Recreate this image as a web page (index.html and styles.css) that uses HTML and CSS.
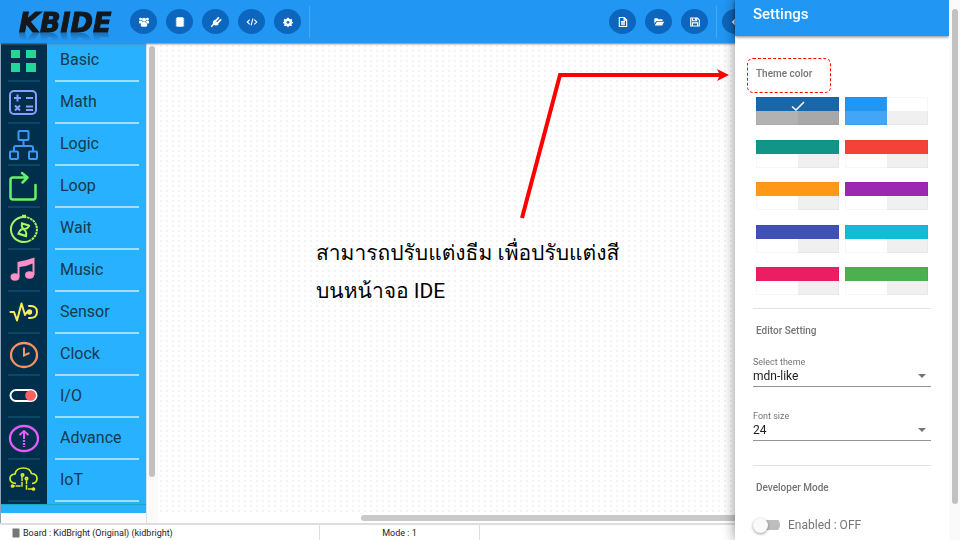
FILE: index.html
```html
<!DOCTYPE html>
<html lang="th">
<head>
<meta charset="utf-8">
<meta name="viewport" content="width=device-width, initial-scale=1">
<title>KBIDE</title>
<link rel="stylesheet" href="styles.css">
</head>
<body>
<div class="app">
  <header class="topbar">
    <h1 class="logo">KBIDE</h1>
    <nav class="tools" aria-label="Board tools">
      <button class="tool" type="button" aria-label="Community"><svg viewBox="0 0 14 14"><circle cx="3" cy="3.6" r="1.7"/><circle cx="11" cy="3.6" r="1.7"/><circle cx="7" cy="4.4" r="2.4"/><path d="M1.4 5.6h3l1 1.6-1.8 1.6H2.2Q1 8.600 1 7.200zM12.600 5.600h-3L8.600 7.200l1.800 1.600h1.400Q13 8.600 13 7.200zM4.400 7h5.200q1.400 1.200 1.200 4.200Q10.700 12.400 9.500 12.400h-5Q3.300 12.400 3.200 11.200 3 8.200 4.400 7z"/></svg></button>
      <button class="tool" type="button" aria-label="Board"><svg viewBox="0 0 14 14"><rect x="3" y="1.500" width="8" height="11" rx="1"/><path d="M2.700 2.500v9.500M11.300 2.500v9.500" stroke="#fff" stroke-dasharray="1.500 .500"/></svg></button>
      <button class="tool" type="button" aria-label="Plugins"><svg viewBox="0 0 14 14"><path d="M5.300 4.300l5 5Q8.600 11.600 6 10.900L4.600 10.500 2 13 .8 12 3.300 9.200Q2.500 6.300 5.300 4.300z"/><path d="M6.800 5.300l3-3.200M9.200 7.600l3.200-3" stroke="#fff" stroke-width="2" stroke-linecap="round"/></svg></button>
      <button class="tool" type="button" aria-label="Source code"><svg class="line" viewBox="0 0 14 14"><path d="M4.300 4.200L1.500 7l2.800 2.800M9.700 4.200L12.500 7 9.700 9.800M8 3L6 11"/></svg></button>
      <button class="tool" type="button" aria-label="Preferences"><svg viewBox="0 0 14 14"><path fill-rule="evenodd" d="M6 2h2l.4 1.300 1.300.5L11 3.200 12 4.600l-.6 1.100.3 1L13 7.200v1l-1.400.5-.5 1 .6 1.300-1.300 1-1.400-.6-1 .4L7.500 13h-1L6 11.800l-1-.4-1.400.6-1.300-1 .6-1.300-.5-1L1 8.200v-1l1.300-.5.3-1L2 4.600l1-1.400 1.300.6L5.600 3.300zM7 5.700a1.700 1.700 0 1 0 .01 0z"/></svg></button>
    </nav>
    <span class="rule"></span>
    <nav class="tools file-tools" aria-label="File tools">
      <button class="tool" type="button" aria-label="New file"><svg class="line" viewBox="0 0 14 14"><path d="M2.700 1.700h5.800l2.800 2.800v7.800H2.700zM8.300 1.800v3h3M4.700 6.500h4.600M4.700 8.300h4.600M4.700 10.200h4.600"/></svg></button>
      <button class="tool" type="button" aria-label="Open file"><svg viewBox="0 0 14 14"><path d="M1.500 9V3.500q0-.8.800-.8h3l1 1.200h4q.9 0 .9.900v1H4.500q-.8 0-1.200.700z"/><path d="M4.700 6.600H13L11 10.500q-.2.600-1 .6H2z"/></svg></button>
      <button class="tool" type="button" aria-label="Save file"><svg class="line" viewBox="0 0 14 14"><path d="M2 2.300h7.800L12 4.500v7.200H2zM4 2.500v3h5v-3M4 11.500V8h6v3.500M7.500 3v1.600"/></svg></button>
    </nav>
    <span class="rule"></span>
    <button class="tool" type="button" aria-label="Undo"><svg class="line" viewBox="0 0 14 14"><path d="M6 4L3 7l3 3M3 7h8"/></svg></button>
  </header>

  <main class="workspace">
    <aside class="sidebar">
      <ul class="categories">
        <li class="category"><a href="#basic">
          <span class="glyph"><svg viewBox="0 0 32 32" fill="#22d798"><path d="M3 5h9v8H3zM18 5h10v8H18zM3 18h9v9H3zM18 18h10v9H18z"/></svg></span><span class="name">Basic</span></a></li>
        <li class="category"><a href="#math">
          <span class="glyph"><svg viewBox="0 0 32 32" fill="none" stroke="#8c9bff" stroke-width="2"><rect x="2" y="4" width="26" height="23" rx="4"/><path d="M6 11h7M9.500 7.500v7M18 11h7M7 18.500l5 5M12 18.500l-5 5M18 19.500h7M18 23h7"/></svg></span><span class="name">Math</span></a></li>
        <li class="category"><a href="#logic">
          <span class="glyph"><svg viewBox="0 0 32 32" fill="none" stroke="#3b98fb" stroke-width="2"><rect x="10.500" y="2" width="10" height="9" rx="1"/><rect x="2" y="22.500" width="8" height="7.500" rx="1"/><rect x="21" y="22.500" width="8" height="7.500" rx="1"/><path d="M15.500 11v6M6 22v-3q0-2 2-2h15q2 0 2 2v3"/></svg></span><span class="name">Logic</span></a></li>
        <li class="category"><a href="#loop">
          <span class="glyph"><svg viewBox="0 0 32 32" fill="none" stroke="#66f266" stroke-width="2.500" stroke-linecap="round" stroke-linejoin="round"><path d="M19 6.500H5q-2.500 0-2.500 2.500v17q0 2.500 2.500 2.500h20q2.500 0 2.500-2.500V14M14 2l5.500 4.500-5 5"/></svg></span><span class="name">Loop</span></a></li>
        <li class="category"><a href="#wait">
          <span class="glyph"><svg viewBox="0 0 32 32" fill="none" stroke="#a8f55f" stroke-width="2"><path d="M16 4a13 12.500 0 1 0 7 23"/><path d="M16 4a13 12.500 0 0 1 7 23" stroke-dasharray="2.500 .700"/><path d="M14 3h4" stroke-width="2.500"/><path stroke-width="1.900" stroke-linejoin="round" d="M13 10l9 3M9.500 20.500l9.500 3M14 10.500c-1 4 1 5 1.500 5.500-2 0-4 1.500-5 4.500l7.500 2.500c1-4-1-6-2.500-7 3 0 5-1 5.500-3.500z"/></svg></span><span class="name">Wait</span></a></li>
        <li class="category"><a href="#music">
          <span class="glyph"><svg viewBox="0 0 32 32" fill="#ff8fc6"><ellipse cx="7" cy="22" rx="4.500" ry="3.700"/><ellipse cx="21.500" cy="20" rx="4.500" ry="3.700"/><path d="M9.500 7Q17 6 26.500 2.500V20h-2V8.500q-6 3-13 3.500v10h-2z"/></svg></span><span class="name">Music</span></a></li>
        <li class="category"><a href="#sensor">
          <span class="glyph"><svg viewBox="0 0 32 32" fill="none" stroke="#f8ee5c" stroke-width="2" stroke-linejoin="round" stroke-linecap="round"><path d="M2.500 15H6l3 8.500 4.500-17L17 18l2-3h2M21 9q8-.5 8 6t-8 6"/><circle cx="21.500" cy="15" r="1.700" fill="#f8ee5c"/></svg></span><span class="name">Sensor</span></a></li>
        <li class="category"><a href="#clock">
          <span class="glyph"><svg viewBox="0 0 32 32" fill="none" stroke="#fb9262" stroke-width="2.300"><ellipse cx="16" cy="16" rx="13" ry="12"/><path stroke-width="2" d="M16 8.500v8l5.500-2.500"/></svg></span><span class="name">Clock</span></a></li>
        <li class="category"><a href="#io">
          <span class="glyph"><svg viewBox="0 0 32 32"><rect x="2.500" y="9" width="26" height="11" rx="5.500" fill="none" stroke="#fff" stroke-width="2"/><circle cx="22.500" cy="14.500" r="5.300" fill="#ff6060"/></svg></span><span class="name">I/O</span></a></li>
        <li class="category"><a href="#advance">
          <span class="glyph"><svg viewBox="0 0 32 32" fill="none" stroke="#e45cfb" stroke-width="2.300"><ellipse cx="16" cy="15.500" rx="14" ry="12.500"/><path stroke-width="2" d="M11.500 12L16 8l4.500 4M16 8v8"/><path d="M16 17v7" stroke-dasharray="2 1"/></svg></span><span class="name">Advance</span></a></li>
        <li class="category"><a href="#iot">
          <span class="glyph"><svg viewBox="0 0 32 32" fill="none" stroke="#d9ec23" stroke-width="1.700"><path d="M8 18.500Q2 18 2 13.500 2 9.500 7 9q1-6 8.500-6Q22 3 23.500 8.500 29 9 29 13.500t-5 5"/><path d="M14 11v10H5M18.500 14v10h7" stroke-width="1.500" stroke-dasharray="5 .700"/><circle cx="14.500" cy="10" r="1.200"/><circle cx="18.500" cy="13.500" r="1.200"/><circle cx="4.500" cy="21" r="1" fill="#d9ec23"/><circle cx="25.500" cy="24" r="1" fill="#d9ec23"/></svg></span><span class="name">IoT</span></a></li>
      </ul>
      <div class="more"></div>
    </aside>
    <div class="track"><div class="thumb"></div></div>
    <section class="canvas">
      <div class="grid"></div>
      <div class="htrack"><div class="hthumb"></div></div>
    </section>
  </main>

  <footer class="status">
    <span class="cell board"><svg viewBox="0 0 10 10"><path d="M1.500.5h7v9h-7z"/></svg>Board : KidBright (Original) (kidbright)</span>
    <span class="cell mode">Mode : 1</span>
  </footer>
</div>

<p class="note">สามารถปรับแต่งธีม เพื่อปรับแต่งสี<br>บนหน้าจอ IDE</p>
<svg class="pointer" viewBox="0 0 216 156" aria-hidden="true"><path d="M6 152L44 9H206" fill="none" stroke="#f00" stroke-width="4"/><path d="M201 3l12 6-12 6 3-6z" fill="#f00"/></svg>

<aside class="settings" aria-label="Settings">
  <div class="sheet">
    <h2 class="title">Settings</h2>
    <form class="body">
      <h3 class="heading marked">Theme color</h3>
      <div class="swatches" role="radiogroup" aria-label="Theme color">
        <label class="swatch current"><input type="radio" name="theme" aria-label="Blue" checked><svg viewBox="0 0 14 10"><path d="M1 5.500l4 3.500 8-8"/></svg></label>
        <label class="swatch light"><input type="radio" name="theme" aria-label="Light blue"></label>
        <label class="swatch teal"><input type="radio" name="theme" aria-label="Teal"></label>
        <label class="swatch red"><input type="radio" name="theme" aria-label="Red"></label>
        <label class="swatch orange"><input type="radio" name="theme" aria-label="Orange"></label>
        <label class="swatch purple"><input type="radio" name="theme" aria-label="Purple"></label>
        <label class="swatch indigo"><input type="radio" name="theme" aria-label="Indigo"></label>
        <label class="swatch cyan"><input type="radio" name="theme" aria-label="Cyan"></label>
        <label class="swatch pink"><input type="radio" name="theme" aria-label="Pink"></label>
        <label class="swatch green"><input type="radio" name="theme" aria-label="Green"></label>
      </div>
      <hr class="divider">
      <h3 class="heading">Editor Setting</h3>
      <div class="field">
        <label for="theme-name">Select theme</label>
        <select id="theme-name"><option>mdn-like</option></select>
      </div>
      <div class="field">
        <label for="font-size">Font size</label>
        <select id="font-size"><option>24</option></select>
      </div>
      <hr class="divider">
      <h3 class="heading">Developer Mode</h3>
      <div class="switch"><input type="checkbox" id="dev"><label for="dev">Enabled : OFF</label></div>
    </form>
  </div>
  <div class="scroll"><div class="thumb"></div></div>
</aside>
</body>
</html>
```
FILE: styles.css
```css
* { box-sizing: border-box; }

body {
  margin: 0;
  font-family: Roboto, "Liberation Sans", sans-serif;
  color: #222;
  overflow: hidden;
}

.app {
  display: grid;
  grid-template-rows: 43px 1fr 17px;
  height: 100vh;
}

/* Top bar */
.topbar {
  position: relative;
  z-index: 1;
  display: flex;
  align-items: center;
  padding: 0 211px 0 19px;
  background: #2196f3;
  box-shadow: 0 1px 2px #777;
}

.logo {
  margin: 0 18px 0 0;
  padding-top: 2px;
  width: 93px;
  font: italic bold 27px/22px "DejaVu Sans", sans-serif;
  color: #15171a;
  -webkit-text-stroke: 1px #15171a;
  -webkit-box-reflect: below -3px linear-gradient(transparent 60%, rgba(0, 0, 0, .4));
}

.tools { display: flex; gap: 9px; }
.file-tools { margin-left: auto; }

.tool {
  display: grid;
  place-items: center;
  width: 27px;
  height: 25px;
  padding: 0;
  border: 0;
  border-radius: 50%;
  background: #0c66bd;
}

.tool svg { width: 12px; height: 12px; fill: #fff; }
.tool .line { fill: none; stroke: #fff; stroke-width: 1.3; }

.rule {
  width: 1px;
  height: 32px;
  margin: 0 5px 0 8px;
  background: #4aa9f5;
}

/* Block categories */
.workspace { display: flex; min-height: 0; }

.sidebar {
  display: flex;
  flex-direction: column;
  width: 147px;
  border-left: 1px solid #8fa3b3;
  border-right: 1px solid #d5e3ec;
  background: #fcfcfc;
  overflow: hidden;
}

.categories {
  margin: -4px 0 0;
  padding: 0 0 3px;
  list-style: none;
  background: linear-gradient(90deg, #002f4b 46px, #28b1ff 46px);
}

.category a {
  display: grid;
  grid-template-columns: 32px 84px;
  gap: 15px;
  height: 42px;
  padding-left: 7px;
  color: #17394d;
  font-size: 16px;
  text-decoration: none;
}

.glyph { border-bottom: 2px solid #0e4668; }
.glyph svg { display: block; width: 32px; height: 32px; margin-top: 6px; }

.name {
  padding-left: 5px;
  line-height: 41px;
  border-bottom: 2px solid #a2defe;
}

.more { height: 9px; background: #28b1ff; border-top: 1px solid #17a9c0; }

.track { width: 11px; padding: 3px 3px 46px 2px; background: #fafafa; }
.thumb { height: 100%; border-radius: 3px; background: #c1c1c1; }

/* Editor canvas */
.canvas { display: flex; flex-direction: column; flex: 1; min-width: 0; }

.grid {
  flex: 1;
  background: radial-gradient(circle at 3px 3px, #f4f4f4 0, #f4f4f4 1px, #fff 1px) 0 0 / 6px 5px;
}

.htrack { height: 9px; padding: 1px 0 2px 203px; }
.hthumb { height: 6px; border-radius: 3px 0 0 3px; background: #c9c9c9; }

/* Status bar */
.status {
  display: flex;
  border-top: 2px solid #dedede;
  background: #fff;
  font-size: 9px;
  line-height: 16px;
}

.cell { border-right: 1px solid #ddd; }
.board { display: flex; align-items: center; gap: 2px; width: 320px; padding-left: 11px; }
.board svg { width: 10px; height: 10px; fill: #777; }
.mode { width: 160px; text-align: center; }

/* Annotation over the canvas */
.note {
  position: absolute;
  left: 316px;
  top: 234px;
  margin: 0;
  font: 21px/38px Roboto, Loma, "Noto Sans Thai", sans-serif;
  color: #000;
  white-space: nowrap;
}

.pointer { position: absolute; left: 516px; top: 66px; width: 216px; height: 156px; }

/* Settings drawer */
.settings {
  position: fixed;
  z-index: 2;
  top: 0;
  right: 0;
  bottom: 0;
  display: flex;
  width: 225px;
  background: #fff;
  box-shadow: 0 0 12px rgba(0, 0, 0, .45);
}

.sheet { flex: 1; }

.title {
  margin: 0;
  height: 36px;
  padding-left: 18px;
  background: #2196f3;
  color: #fff;
  font-size: 15px;
  font-weight: 500;
  line-height: 29px;
  box-shadow: 0 1px 3px rgba(0, 0, 0, .5);
}

.body { padding: 22px 18px 0; }

.heading {
  margin: 0;
  padding-left: 3px;
  color: #757575;
  font-size: 10px;
  font-weight: 500;
  line-height: 12px;
}

.marked {
  width: 84px;
  margin-left: -6px;
  padding: 9px 0 12px 8px;
  border: 1px dashed #f00;
  border-radius: 6px;
}

.swatches {
  display: grid;
  grid-template-columns: 1fr 1fr;
  align-content: space-between;
  column-gap: 6px;
  height: 198px;
  margin: 4px 3px 13px 3px;
}

.swatch {
  display: grid;
  justify-items: center;
  height: 28px;
  box-shadow: inset 0 0 0 1px rgba(0, 0, 0, .03);
  background:
    linear-gradient(var(--tone), var(--tone)) 0 0 / 100% 14px no-repeat,
    linear-gradient(90deg, #fff 50%, #f0f0f0 50%);
}

.swatch input { grid-area: 1 / 1; appearance: none; width: 100%; height: 28px; margin: 0; }
.swatch svg { grid-area: 1 / 1; width: 14px; height: 10px; margin-top: 4px; fill: none; stroke: #fff; stroke-width: 1.5; }

.current {
  --tone: #1a66ab;
  background:
    linear-gradient(var(--tone), var(--tone)) 0 0 / 100% 14px no-repeat,
    linear-gradient(90deg, #b2b2b2 50%, #a8a8a8 50%);
}

.light {
  background:
    linear-gradient(#2196f3, #2196f3) 0 0 / 50% 14px no-repeat,
    linear-gradient(#fff, #fff) 100% 0 / 50% 14px no-repeat,
    linear-gradient(90deg, #42a5f5 50%, #f0f0f0 50%);
}

.teal { --tone: #119587; }
.red { --tone: #f44336; }
.orange { --tone: #ff9817; }
.purple { --tone: #9c27b0; }
.indigo { --tone: #3f51b5; }
.cyan { --tone: #15bbd6; }
.pink { --tone: #e91e63; }
.green { --tone: #4caf50; }

.divider { height: 1px; margin: 0 0 16px; border: 0; background: #e2e2e2; }

.field {
  position: relative;
  display: grid;
  margin: 20px 0 24px;
  border-bottom: 1px solid #949494;
}

.field + .field { margin-top: 0; }

.field label { color: #757575; font-size: 9px; line-height: 11px; }

.field select {
  appearance: none;
  height: 18px;
  padding: 0 0 2px;
  border: 0;
  background: none;
  color: #1c1c1c;
  font: 12px/16px Roboto, sans-serif;
}

.field::after {
  content: "";
  position: absolute;
  right: 5px;
  bottom: 8px;
  border: 4px solid transparent;
  border-top-color: #757575;
  border-bottom: 0;
}

.switch { display: flex; align-items: center; gap: 8px; margin-top: 23px; color: #757575; font-size: 12px; }

.switch input {
  display: flex;
  align-items: center;
  appearance: none;
  width: 27px;
  height: 16px;
  margin: 0;
  background: linear-gradient(#bdbdbd, #bdbdbd) 100% 50% / 22px 10px no-repeat;
  border-radius: 8px;
}

.switch input::before {
  content: "";
  width: 15px;
  height: 15px;
  border-radius: 50%;
  background: #fafafa;
  box-shadow: 0 1px 3px rgba(0, 0, 0, .4);
}

.scroll { width: 11px; padding: 9px 2px 36px 3px; background: #fafafa; }
```
